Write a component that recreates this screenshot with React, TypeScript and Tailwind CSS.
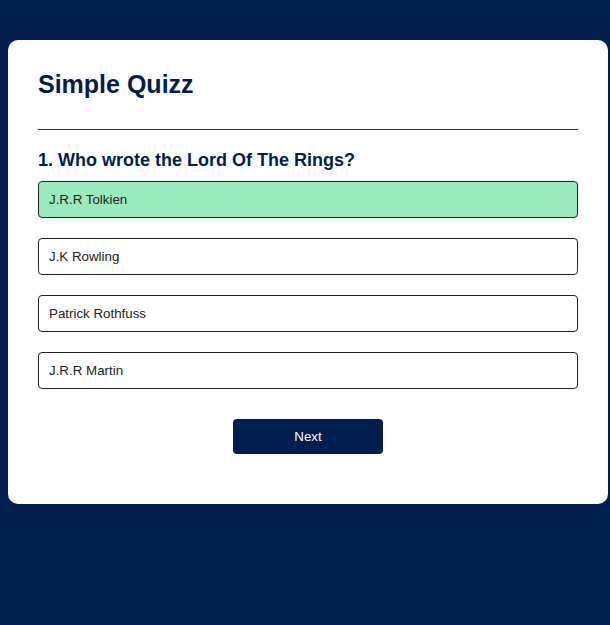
export default function App() {
  const answers = ["J.R.R Tolkien", "J.K Rowling", "Patrick Rothfuss", "J.R.R Martin"];
  return (
    <div className="min-h-[625px] bg-[#001e4d] pt-[40px] pl-[8px] font-['Liberation_Sans',Arial,sans-serif]">
      <div className="w-[600px] rounded-[10px] bg-white p-[30px]">
        <h1 className="border-b border-[#333] pb-[30px] text-[25px] leading-[29px] font-bold text-[#001e4d]">
          Simple Quizz
        </h1>
        <div className="pt-[20px]">
          <h2 className="text-[18px] leading-[21px] font-bold text-[#001e4d]">
            1. Who wrote the Lord Of The Rings?
          </h2>
          <div className="flex flex-col gap-[20px] pt-[10px]">
            {answers.map((a, i) => (
              <button
                key={a}
                className={`block w-full rounded-[4px] border border-[#222] px-[10px] py-[10px] text-left text-[13.33px] leading-[15px] text-[#222] ${
                  i === 0 ? "bg-[#9aeabc]" : "bg-white"
                }`}
              >
                {a}
              </button>
            ))}
          </div>
          <button className="mx-auto mt-[30px] mb-[20px] block w-[150px] rounded-[4px] bg-[#001e4d] px-[10px] py-[10px] text-[13.33px] leading-[15px] font-medium text-white">
            Next
          </button>
        </div>
      </div>
    </div>
  );
}
